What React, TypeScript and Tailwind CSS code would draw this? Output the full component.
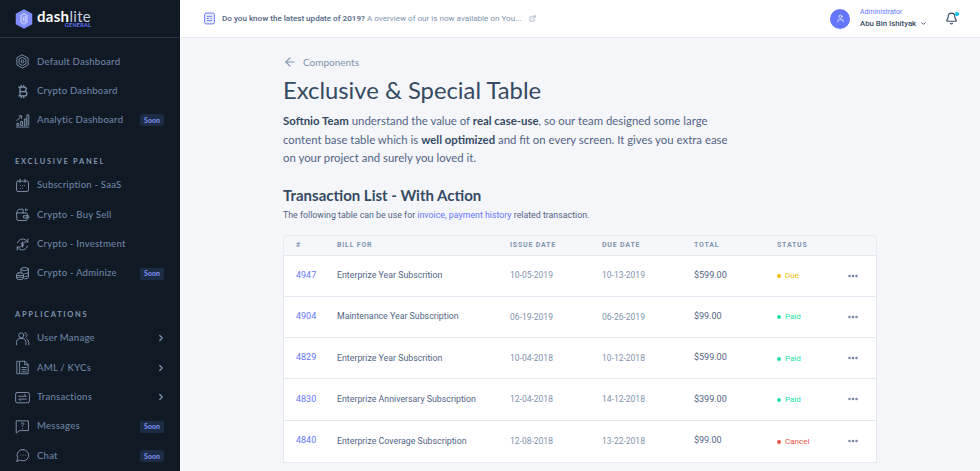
import React from 'react';
import { ArrowLeft, Bell, ChevronDown, ChevronRight, ExternalLink, MoreHorizontal, User } from 'lucide-react';

function Ico({ children }: { children: React.ReactNode }) {
  return (
    <svg viewBox="0 0 24 24" fill="none" stroke="currentColor" strokeWidth="1.5" strokeLinecap="round" strokeLinejoin="round" className="w-[15px] h-[15px] text-[#8094ae]">
      {children}
    </svg>
  );
}

const icons: Record<string, React.ReactNode> = {
  default: (
    <Ico>
      <path d="M12 1.500l9 5v11l-9 5-9-5v-11z" />
      <path d="M12 5.500l5.500 3v7L12 18.500l-5.500-3v-7z" />
      <path d="M12 9.500l2 1.200v2.600l-2 1.200-2-1.200v-2.600z" />
    </Ico>
  ),
  crypto: (
    <Ico>
      <path strokeWidth="2" d="M8 5h6.500a3.500 3.500 0 0 1 0 7H8zM8 12h7.500a3.500 3.500 0 0 1 0 7H8zM6 5h2M6 19h2M10 2v3M14 2v3M10 19v3M14 19v3" />
    </Ico>
  ),
  analytic: (
    <Ico>
      <path d="M2 22.500h20M3 19.500v-3h3v3zM9 19.500v-6h3v6zM15 19.500v-10h3v10zM19 19.500V3h3v16.500M3 12l7-7M6.500 4.500H10.500v4" />
    </Ico>
  ),
  saas: (
    <Ico>
      <rect x="2.500" y="5" width="19" height="16.500" rx="2" />
      <path d="M8 2v5M16 2v5M9 12h.01M12 12h.01M15 12h.01M9 16.500h.01M12 16.500h.01" />
    </Ico>
  ),
  buy: (
    <Ico>
      <path d="M3 9.500h15a1.500 1.500 0 0 1 1.500 1.500v9a1.500 1.500 0 0 1-1.500 1.500H4.500A1.500 1.500 0 0 1 3 20z" />
      <path d="M3 9.500c0-4 2-6 5-6h5v6M14 14h8v3.500h-8zM17 3v3M20 4.500h-3" />
    </Ico>
  ),
  invest: (
    <Ico>
      <path d="M4 9.500a8.500 8.500 0 0 1 14-4l2.500 2.500M20.500 3v5h-5M20 14.500a8.500 8.500 0 0 1-14 4L3.500 16M3.500 21v-5h5" />
      <path d="M14.500 9.500H11a1.300 1.300 0 0 0 0 2.500h2a1.300 1.300 0 0 1 0 2.500H9.500M12 8v8" />
    </Ico>
  ),
  adminize: (
    <Ico>
      <ellipse cx="15.500" cy="5" rx="6" ry="2.500" />
      <path d="M9.500 5v6M21.500 5v13c0 1.500-3 2.500-6 2.500M21.500 10c0 1.400-3 2.500-6 2.500M21.500 14.500c0 1.400-3 2.500-6 2.500" />
      <rect x="2.500" y="11" width="11" height="10.500" rx="3" />
      <path d="M2.500 15h11M2.500 18h11" />
    </Ico>
  ),
  user: (
    <Ico>
      <circle cx="10" cy="7" r="4" />
      <path d="M2.500 22v-3.500a6.500 6.500 0 0 1 6.500-6.500h2a6.500 6.500 0 0 1 6.500 6.500V22M15.500 3a4 4 0 0 1 2 7.300M19 13a6 6 0 0 1 3 5v4" />
    </Ico>
  ),
  aml: (
    <Ico>
      <path d="M6 2H3v20h3" />
      <path d="M8 2h8l5 5v15H8z" />
      <path d="M15.500 2v5.500H21M11 12h7M11 15.500h7M11 19h7" />
    </Ico>
  ),
  transactions: (
    <Ico>
      <rect x="1" y="4" width="22" height="16.500" rx="2.500" />
      <path d="M6 10h12l-3-3M18 14.500H6l3 3" />
    </Ico>
  ),
  messages: (
    <Ico>
      <path d="M2.500 3h19v15.500H7.500l-5 3.500z" />
      <path d="M10 8a2 2 0 1 1 3 1.700c-.7.4-1 .8-1 1.800M12 15h.01" />
    </Ico>
  ),
  chat: (
    <Ico>
      <path d="M13 2.500a9 9 0 1 1-4.500 16.800L2.500 21.500l2-5.500A9 9 0 0 1 13 2.500z" />
      <path d="M9 11.500h.01M13 11.500h.01M17 11.500h.01" />
    </Ico>
  ),
};

const groups = [
  {
    title: '',
    items: [
      { key: 'default', label: 'Default Dashboard' },
      { key: 'crypto', label: 'Crypto Dashboard' },
      { key: 'analytic', label: 'Analytic Dashboard', soon: true },
    ],
  },
  {
    title: 'EXCLUSIVE PANEL',
    items: [
      { key: 'saas', label: 'Subscription - SaaS' },
      { key: 'buy', label: 'Crypto - Buy Sell' },
      { key: 'invest', label: 'Crypto - Investment' },
      { key: 'adminize', label: 'Crypto - Adminize', soon: true },
    ],
  },
  {
    title: 'APPLICATIONS',
    items: [
      { key: 'user', label: 'User Manage', arrow: true },
      { key: 'aml', label: 'AML / KYCs', arrow: true },
      { key: 'transactions', label: 'Transactions', arrow: true },
      { key: 'messages', label: 'Messages', soon: true },
      { key: 'chat', label: 'Chat', soon: true },
    ],
  },
];

const rows = [
  { id: '4947', bill: 'Enterprize Year Subscrition', issue: '10-05-2019', due: '10-13-2019', total: '$599.00', status: 'Due' },
  { id: '4904', bill: 'Maintenance Year Subscription', issue: '06-19-2019', due: '06-26-2019', total: '$99.00', status: 'Paid' },
  { id: '4829', bill: 'Enterprize Year Subscrition', issue: '10-04-2018', due: '10-12-2018', total: '$599.00', status: 'Paid' },
  { id: '4830', bill: 'Enterprize Anniversary Subscription', issue: '12-04-2018', due: '14-12-2018', total: '$399.00', status: 'Paid' },
  { id: '4840', bill: 'Enterprize Coverage Subscription', issue: '12-08-2018', due: '13-22-2018', total: '$99.00', status: 'Cancel' },
];

function Status({ status }: { status: string }) {
  const text = status === 'Due' ? 'text-[#f4bd0e]' : status === 'Paid' ? 'text-[#1ee0ac]' : 'text-[#e85347]';
  const dot = status === 'Due' ? 'bg-[#f4bd0e]' : status === 'Paid' ? 'bg-[#1ee0ac]' : 'bg-[#e85347]';
  return (
    <span className={`flex items-center gap-[4px] text-[8px] pt-[1px] ${text}`}>
      <span className={`w-[4px] h-[4px] rounded-full ${dot}`} />
      {status}
    </span>
  );
}

function Sidebar() {
  return (
    <aside className="w-[180px] shrink-0 h-full bg-[#101924] overflow-hidden font-['Lato',sans-serif]">
      <div className="h-[38px] border-b border-[#2a3543] pl-[15px] flex items-center gap-[4px]">
        <svg viewBox="0 0 24 26" className="w-[18px] h-[20px]">
          <path d="M12 0l11 6v14l-11 6-11-6V6z" fill="#7f8dfa" />
          <path d="M8 8l4-2 4 2v9l-4 3-4-3zM11 10v6M13.500 9v8" fill="none" stroke="#e5e9ff" strokeWidth="1.200" />
        </svg>
        <div className="relative text-[15px] leading-none text-white font-bold tracking-[0.3px] -mt-[4px]">
          dash<span className="font-normal text-[#c4cde0]">lite</span>
          <span className="absolute right-0 top-[14px] text-[5.500px] leading-none font-bold text-[#6576ff] tracking-[0.2px]">GENERAL</span>
        </div>
      </div>
      <nav className="pt-[9px]">
        {groups.map((group) => (
          <div key={group.title} className="mb-[17.500px]">
            {group.title && (
              <div className="h-[18px] pl-[15px] flex items-center text-[7.500px] font-bold tracking-[1.700px] text-[#8094ae]">{group.title}</div>
            )}
            {group.items.map((item) => (
              <div key={item.label} className="h-[29.400px] pl-[15px] pr-[16px] flex items-center">
                <span className="w-[22px] flex">{icons[item.key]}</span>
                <span className="flex-1 text-[9.600px] tracking-[0.2px] font-medium text-[#6e82a5]">{item.label}</span>
                {item.soon && (
                  <span className="h-[12px] w-[24px] rounded-[2px] bg-[#1c2b46] text-[#8094f8] text-[7px] font-bold flex items-center justify-center">Soon</span>
                )}
                {item.arrow && <ChevronRight className="w-[10px] h-[10px] text-[#8094ae] -mr-[2px]" strokeWidth={3} />}
              </div>
            ))}
          </div>
        ))}
      </nav>
    </aside>
  );
}

function Topbar() {
  return (
    <header className="h-[38px] shrink-0 bg-white border-b border-[#e5e9f2] flex items-center pl-[23px] pr-[22px]">
      <svg viewBox="0 0 24 24" fill="none" stroke="#6576ff" strokeWidth="1.800" className="w-[13px] h-[13px] mr-[6px]">
        <rect x="3" y="2" width="18" height="20" rx="3" fill="#eef0ff" />
        <path d="M7 8h10M7 12h4M14 12h3M7 16h10" />
      </svg>
      <span className="text-[8.100px] font-medium text-[#526484]">Do you know the latest update of 2019?</span>
      <span className="text-[8.100px] text-[#8094ae] ml-[2px]">A overview of our is now available on You...</span>
      <ExternalLink className="w-[7px] h-[7px] text-[#8094ae] ml-[7px]" />
      <div className="ml-auto flex items-center">
        <span className="w-[20px] h-[20px] rounded-full bg-[#6576ff] flex items-center justify-center">
          <User className="w-[9px] h-[9px] text-white" />
        </span>
        <div className="ml-[10px] w-[68px]">
          <div className="text-[7px] leading-[10px] text-[#6576ff]">Administrator</div>
          <div className="text-[7.800px] leading-[13px] font-medium text-[#364a63] flex items-center gap-[4px] whitespace-nowrap">
            Abu Bin Ishityak <ChevronDown className="w-[7px] h-[7px]" strokeWidth={3} />
          </div>
        </div>
        <span className="relative ml-[17px]">
          <Bell className="w-[13px] h-[13px] text-[#364a63]" />
          <span className="absolute top-0 right-[-1px] w-[4px] h-[4px] rounded-full bg-[#09c2de]" />
        </span>
      </div>
    </header>
  );
}

export default function App() {
  return (
    <div className="h-screen flex overflow-hidden bg-[#f5f6fa] font-['Roboto',sans-serif]">
      <Sidebar />
      <div className="flex-1 min-w-0 flex flex-col">
        <Topbar />
        <main className="pl-[103px] pr-[103px] pt-[16px]">
          <div className="flex items-center gap-[6px] text-[#8094ae] text-[10px] h-[16px] font-['Lato',sans-serif]">
            <ArrowLeft className="w-[14px] h-[14px]" />
            <span>Components</span>
          </div>
          <h1 className="mt-[3px] text-[23.800px] leading-[34px] text-[#364a63] font-['Lato',sans-serif]">Exclusive &amp; Special Table</h1>
          <p className="mt-[5px] w-[448px] text-[11.400px] leading-[18.500px] text-[#526484] font-['Lato',sans-serif]">
            <span className="font-bold text-[#364a63]">Softnio Team</span> understand the value of <span className="font-bold text-[#364a63]">real case-use</span>, so our team designed some large content base table which is <span className="font-bold text-[#364a63]">well optimized</span> and fit on every screen. It gives you extra ease on your project and surely you loved it.
          </p>
          <h2 className="mt-[17px] text-[15px] leading-[20px] font-bold text-[#364a63] font-['Lato',sans-serif]">Transaction List - With Action</h2>
          <p className="mt-[3px] text-[8.800px] leading-[14px] text-[#526484]">
            The following table can be use for <span className="text-[#6576ff]">invoice, payment history</span> related transaction.
          </p>
          <div className="mt-[13px] border border-[#e5e9f2] bg-white rounded-[2px]">
            <div className="grid grid-cols-[41px_173px_92px_92px_83px_71px_1fr] h-[20px] items-center bg-[#f5f6fa] border-b border-[#e5e9f2] pl-[12px] text-[7px] font-bold tracking-[0.8px] text-[#8094ae]">
              <span>#</span>
              <span>BILL FOR</span>
              <span>ISSUE DATE</span>
              <span>DUE DATE</span>
              <span>TOTAL</span>
              <span>STATUS</span>
              <span />
            </div>
            {rows.map((row) => (
              <div key={row.id} className="grid grid-cols-[41px_173px_92px_92px_83px_71px_1fr] h-[41.250px] items-center border-b border-[#e5e9f2] last:border-b-0 pl-[12px]">
                <span className="text-[9px] text-[#6576ff]">{row.id}</span>
                <span className="text-[8.800px] text-[#526484]">{row.bill}</span>
                <span className="text-[8.500px] text-[#8094ae]">{row.issue}</span>
                <span className="text-[8.500px] text-[#8094ae]">{row.due}</span>
                <span className="text-[9px] text-[#526484]">{row.total}</span>
                <Status status={row.status} />
                <MoreHorizontal className="w-[12px] h-[12px] text-[#6b7d9c] -ml-[1px]" strokeWidth={3} />
              </div>
            ))}
          </div>
        </main>
      </div>
    </div>
  );
}
